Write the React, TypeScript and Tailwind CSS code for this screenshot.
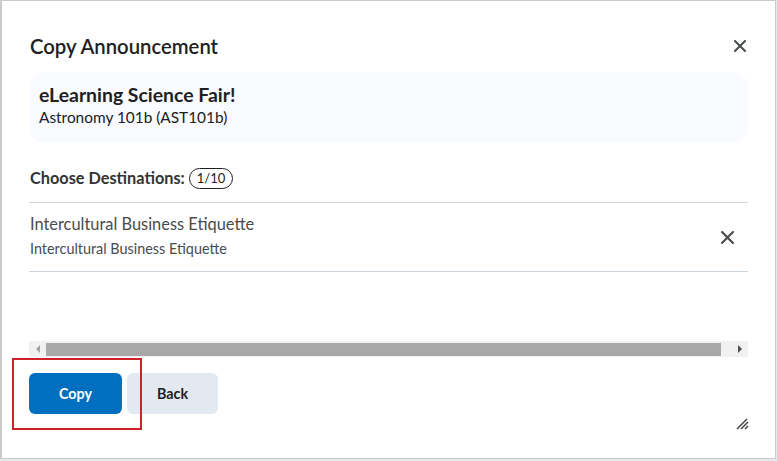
import React from 'react'

function CloseIcon({ size = 12 }: { size?: number }) {
  return (
    <svg width={size} height={size} viewBox="0 0 12 12" fill="none">
      <path d="M1 1L11 11M11 1L1 11" stroke="#494c4e" strokeWidth="2" strokeLinecap="square" />
    </svg>
  )
}

function ResizeGrip() {
  return (
    <svg width="13" height="12" viewBox="0 0 13 12" fill="none">
      <path d="M1 11L11 1M5 11L12 4M9 11L12 8" stroke="#494c4e" strokeWidth="1.6" />
    </svg>
  )
}

export default function App() {
  return (
    <div className="w-[777px] h-[461px] bg-[#e6e9ee] font-['Lato','Noto_Sans',sans-serif]">
      <div className="relative w-[776px] h-[459px] bg-white border border-[#cbcbcb] border-l-2 px-[27px] pt-[31px] flex flex-col">
        <header className="flex items-center justify-between h-[28px]">
          <h1 className="text-[20.3px] leading-[28px] font-semibold text-[#202122] pl-[1px]">Copy Announcement</h1>
          <button className="w-[24px] h-[24px] flex items-center justify-center mr-[-4px]">
            <CloseIcon />
          </button>
        </header>

        <section className="mt-[12px] h-[71px] rounded-[15px] bg-[#f9fbff] pl-[10px] pt-[11px]">
          <div className="text-[19.4px] leading-[24px] font-bold text-[#202122]">eLearning Science Fair!</div>
          <div className="text-[15.4px] leading-[21px] text-[#202122]">Astronomy 101b (AST101b)</div>
        </section>

        <div className="mt-[23px] flex items-center h-[24px] pl-[1px]">
          <span className="text-[16.3px] leading-[24px] font-bold text-[#313335]">Choose Destinations:</span>
          <span className="ml-[4px] h-[21px] px-[7px] rounded-full border border-[#202122] text-[13px] leading-[19px] text-[#202122] flex items-center">
            1/10
          </span>
        </div>

        <ul className="mt-[12px] border-t border-[#cdd5dc]">
          <li className="h-[69px] border-b border-[#cdd5dc] flex items-center justify-between pl-[1px]">
            <div className="pb-[2px]">
              <div className="text-[16.4px] leading-[20px] text-[#494c4e]">Intercultural Business Etiquette</div>
              <div className="mt-[5px] text-[14.4px] leading-[20px] text-[#494c4e]">Intercultural Business Etiquette</div>
            </div>
            <button className="w-[24px] h-[24px] flex items-center justify-center mr-[9px]">
              <CloseIcon size={13} />
            </button>
          </li>
        </ul>

        <div className="mt-[69px] h-[16px] bg-[#f1f1f1] flex items-center">
          <div className="w-[17px] flex justify-center">
            <div className="w-0 h-0 border-y-[4px] border-y-transparent border-r-[4px] border-r-[#a3a3a3]" />
          </div>
          <div className="flex-1 h-[13px] bg-[#a8a8a8]" />
          <div className="w-[27px] flex justify-center pl-[10px]">
            <div className="w-0 h-0 border-y-[4px] border-y-transparent border-l-[4px] border-l-[#505050]" />
          </div>
        </div>

        <div className="mt-[16px] flex gap-[5px]">
          <button className="w-[93px] h-[41px] rounded-[6px] bg-[#006fbf] text-white text-[14.3px] font-bold">Copy</button>
          <button className="w-[91px] h-[41px] rounded-[6px] bg-[#e3e9f1] text-[#202122] text-[14.3px] font-bold">Back</button>
        </div>

        <div className="absolute left-[10px] top-[357px] w-[130px] h-[72px] border-2 border-[#cc2229] pointer-events-none" />

        <div className="absolute right-[26px] bottom-[28px]">
          <ResizeGrip />
        </div>
      </div>
    </div>
  )
}
